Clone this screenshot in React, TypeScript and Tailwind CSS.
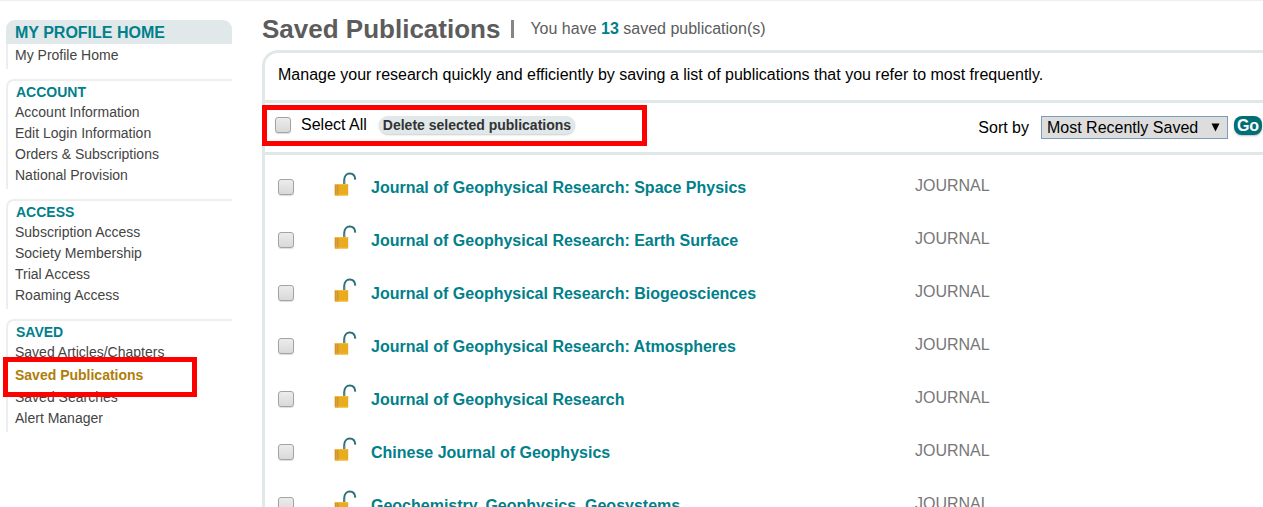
import React from "react";

type NavSection = { title: string; items: string[] };

const sections: NavSection[] = [
  {
    title: "ACCOUNT",
    items: ["Account Information", "Edit Login Information", "Orders & Subscriptions", "National Provision"],
  },
  {
    title: "ACCESS",
    items: ["Subscription Access", "Society Membership", "Trial Access", "Roaming Access"],
  },
  {
    title: "SAVED",
    items: ["Saved Articles/Chapters", "Saved Publications", "Saved Searches", "Alert Manager"],
  },
];

const publications = [
  "Journal of Geophysical Research: Space Physics",
  "Journal of Geophysical Research: Earth Surface",
  "Journal of Geophysical Research: Biogeosciences",
  "Journal of Geophysical Research: Atmospheres",
  "Journal of Geophysical Research",
  "Chinese Journal of Geophysics",
  "Geochemistry, Geophysics, Geosystems",
];

function OpenLock() {
  return (
    <svg width="24" height="24" viewBox="0 0 24 24" aria-hidden="true">
      <path d="M10.200 12V8.200C10.200 4 12.600 1.600 15.800 1.600c3 0 5.200 2 5.500 6" fill="none" stroke="#2b6f78" strokeWidth="2" />
      <path d="M10.200 12V8.500" stroke="#5d8990" strokeWidth="2" />
      <rect x="0.800" y="12" width="13.400" height="11.500" rx="0.600" fill="#e9ab20" />
      <rect x="0.800" y="12" width="3.600" height="11.500" rx="0.600" fill="#cf9330" />
      <path d="M2.500 12.500v10.500" stroke="#dda63c" strokeWidth="0.900" />
      <path d="M1 12.500h13M1 23h13" stroke="#f4bd38" strokeWidth="0.900" />
    </svg>
  );
}

function Checkbox({ id, label }: { id: string; label?: string }) {
  return (
    <input
      id={id}
      type="checkbox"
      aria-label={label}
      className="block size-4 shrink-0 appearance-none rounded-[3px] border border-[#a3a3a3] bg-linear-to-b from-[#ececec] to-[#d9d9d9] shadow-[0_1px_1px_#dddddd] checked:bg-[#00808a]"
    />
  );
}

function Sidebar() {
  return (
    <nav aria-label="Profile" className="flex w-[226px] shrink-0 flex-col gap-[10px] pt-[19px] text-[14px] text-[#444444]">
      <section>
        <h2 className="flex h-6 items-center rounded-t-[9px] bg-[#e0e8ea] pt-px pl-[9px] text-[16px] font-bold text-[#00808a]">
          MY PROFILE HOME
        </h2>
        <div className="h-[25px] border-l-2 border-[#eeeeee] pl-[7px]">
          <a href="#home" className="block leading-[22px]">My Profile Home</a>
        </div>
      </section>
      {sections.map((section) => (
        <section key={section.title} className="rounded-tl-[8px] border-t-2 border-l-2 border-[#eeeeee] pt-px pb-[3px] pl-[7px]">
          <h2 className="pl-px text-[14px] leading-5 font-bold text-[#00808a]">{section.title}</h2>
          <ul>
            {section.items.map((item) =>
              item === "Saved Publications" ? (
                <li key={item} className="relative">
                  <a href="#saved" aria-current="page" className="block leading-6 font-bold text-[#b07d0a]">{item}</a>
                  <span className="pointer-events-none absolute -top-[6px] -left-3 h-10 w-[194px] border-[5px] border-[#ff0000]" />
                </li>
              ) : (
                <li key={item}>
                  <a href="#item" className="block leading-[21px]">{item}</a>
                </li>
              ),
            )}
          </ul>
        </section>
      ))}
    </nav>
  );
}

function Toolbar() {
  return (
    <div className="relative flex h-[49px] items-center justify-between pr-px pl-[10px] text-[16px]">
      <div className="flex items-center pb-[5px]">
        <Checkbox id="select-all" />
        <label htmlFor="select-all" className="ml-[10px]">Select All</label>
        <button type="button" className="ml-3 h-[18px] rounded-[9px] bg-[#e0e8ea] px-1 text-[14px] leading-4 font-bold text-[#333333] shadow-[0_1px_2px_#cccccc]">
          Delete selected publications
        </button>
      </div>
      <div className="flex items-center">
        <label htmlFor="sort">Sort by</label>
        <div className="relative ml-3">
          <select id="sort" className="block h-[23px] w-[187px] appearance-none border border-[#7f9db9] bg-[#dddddd] pl-[5px] text-[16px] leading-5">
            <option>Most Recently Saved</option>
            <option>Title</option>
          </select>
          <svg className="pointer-events-none absolute top-[7px] right-2" width="9" height="9" viewBox="0 0 9 9" aria-hidden="true">
            <path d="M0.500 0.500h8L4.500 8.500z" fill="#000000" />
          </svg>
        </div>
        <button type="button" className="mb-1 ml-[6px] h-[19px] w-7 rounded-[8px] bg-[#006e77] text-center text-[16px] leading-[18px] font-bold text-white shadow-[0_1px_2px_#bbbbbb]">
          Go
        </button>
      </div>
      <span className="pointer-events-none absolute top-[2px] -left-[3px] h-[41px] w-[385px] border-[5px] border-[#ff0000]" />
    </div>
  );
}

export default function App() {
  return (
    <div className="flex h-screen gap-[30px] overflow-hidden border-t border-[#eeeeee] bg-white pl-[6px] font-['Liberation_Sans',Arial,sans-serif] text-black">
      <Sidebar />
      <main className="min-w-0 flex-1">
        <header className="flex h-[49px] items-center pt-[7px] text-[#5c5c5c]">
          <h1 className="text-[26px] leading-8 font-bold">Saved Publications</h1>
          <span className="ml-[11px] h-[18px] w-[3px] bg-[#858585]" />
          <p className="ml-4 text-[16px] leading-5">
            You have <strong className="text-[#00808a]">13</strong> saved publication(s)
          </p>
        </header>
        <section className="rounded-tl-[16px] border-t-3 border-l-3 border-[#e0e8ea]">
          <p className="h-[47px] pt-[10px] pl-[13px] text-[16px] leading-6">
            Manage your research quickly and efficiently by saving a list of publications that you refer to most frequently.
          </p>
          <div className="border-y-3 border-[#e0e8ea]">
            <Toolbar />
          </div>
          <ul className="pt-[5px]">
            {publications.map((name, index) => (
              <li key={name} className="grid h-[53px] grid-cols-[56px_37px_minmax(0,1fr)_348px] items-center pl-[13px] text-[16px]">
                <Checkbox id={"pub-" + index} label={name} />
                <span className="pb-[6px]">
                  <OpenLock />
                </span>
                <a href="#publication" className="pt-[2px] font-bold text-[#00808a]">{name}</a>
                <span className="pb-px text-[#777777]">JOURNAL</span>
              </li>
            ))}
          </ul>
        </section>
      </main>
    </div>
  );
}
